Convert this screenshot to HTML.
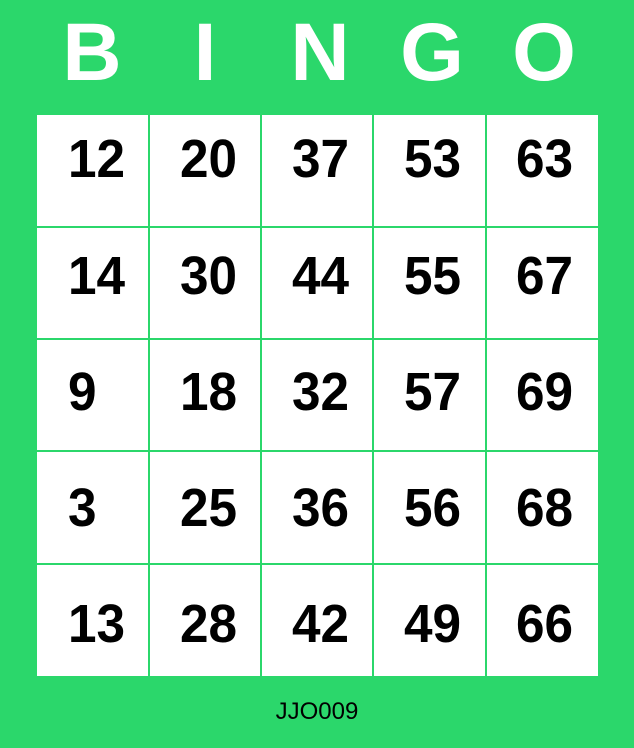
<!DOCTYPE html>
<html><head><style>
body{margin:0;width:634px;height:748px;background:#2bd76b;position:relative;overflow:hidden;font-family:"Liberation Sans",Arial,sans-serif}
.h{position:absolute;top:12px;width:112px;text-align:center;color:#fff;font-weight:bold;font-size:82px;line-height:82px}
.grid{position:absolute;left:37px;top:115px;width:561px;height:561px;background:#fff}
.v{position:absolute;top:0;width:2px;height:561px;background:#2bd76b}
.hz{position:absolute;left:0;height:2px;width:561px;background:#2bd76b}
.n{position:absolute;font-weight:bold;font-size:54px;line-height:54px;color:#000;transform:scaleX(0.95);transform-origin:left}
.f{position:absolute;top:698px;left:0;width:634px;text-align:center;font-size:24px;color:#000}
</style></head><body>
<div class="h" style="left:36px">B</div>
<div class="h" style="left:149px">I</div>
<div class="h" style="left:264px">N</div>
<div class="h" style="left:376px">G</div>
<div class="h" style="left:488px">O</div>
<div class="grid">
<div class="v" style="left:111px"></div><div class="v" style="left:223px"></div><div class="v" style="left:335px"></div><div class="v" style="left:448px"></div>
<div class="hz" style="top:111px"></div><div class="hz" style="top:223px"></div><div class="hz" style="top:335px"></div><div class="hz" style="top:448px"></div>
</div>
<div id="nums"></div>
<script>
var d=[[12,20,37,53,63],[14,30,44,55,67],[9,18,32,57,69],[3,25,36,56,68],[13,28,42,49,66]];
var xs=[68,180,292,404,516],bs=[182,299,415,531,647],h="";
for(var r=0;r<5;r++)for(var c=0;c<5;c++)h+='<div class="n" style="left:'+xs[c]+'px;top:'+(bs[r]-50)+'px">'+d[r][c]+'</div>';
document.getElementById('nums').innerHTML=h;
</script>
<div class="f">JJO009</div>
</body></html>
